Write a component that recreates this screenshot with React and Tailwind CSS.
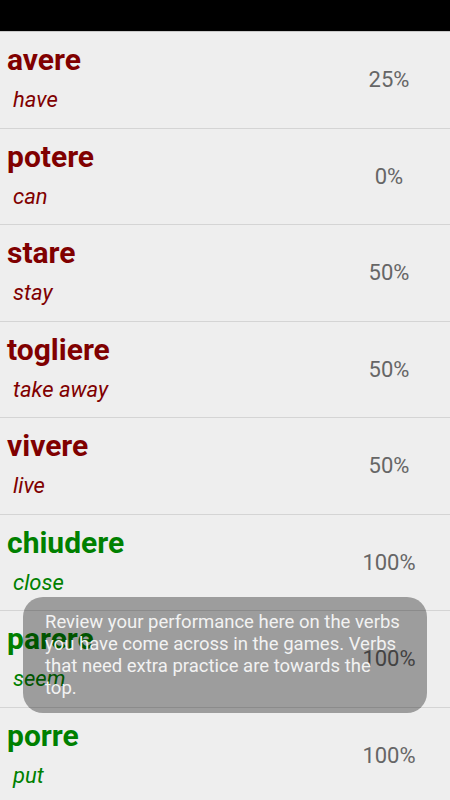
const verbs = [
  { word: "avere", meaning: "have", pct: "25%", good: false },
  { word: "potere", meaning: "can", pct: "0%", good: false },
  { word: "stare", meaning: "stay", pct: "50%", good: false },
  { word: "togliere", meaning: "take away", pct: "50%", good: false },
  { word: "vivere", meaning: "live", pct: "50%", good: false },
  { word: "chiudere", meaning: "close", pct: "100%", good: true },
  { word: "parere", meaning: "seem", pct: "100%", good: true },
  { word: "porre", meaning: "put", pct: "100%", good: true },
];

export default function App() {
  return (
    <div className="relative h-[800px] w-[450px] overflow-hidden bg-[#eeeeee] font-['Roboto',sans-serif]">
      {/* status bar */}
      <div className="h-[31px] bg-black border-b border-[#c8c8c8] box-content" />

      {/* verb list */}
      <ul>
        {verbs.map((v) => (
          <li
            key={v.word}
            className="flex h-[96.5px] items-center border-b border-[#d4d4d4]"
          >
            <div className={`flex-1 self-start pl-[7px] pt-[10px] ${v.good ? "text-[#008000]" : "text-[#800000]"}`}>
              <div className="text-[30px] font-bold leading-[35px]">{v.word}</div>
              <div className="mt-[9px] pl-[6px] text-[22px] italic leading-[28px]">{v.meaning}</div>
            </div>
            <div className="mr-[21px] w-[80px] text-center text-[22px] text-[#666666]">{v.pct}</div>
          </li>
        ))}
      </ul>

      {/* toast */}
      <div className="absolute left-[23px] top-[597px] w-[404px] rounded-[20px] bg-black/[0.34] px-[22px] pt-[13.5px] pb-[13px] text-[18.5px] leading-[22.3px] text-[#f2f2f2]">
        Review your performance here on the verbs you have come across in the games. Verbs that need extra practice are towards the top.
      </div>
    </div>
  );
}
